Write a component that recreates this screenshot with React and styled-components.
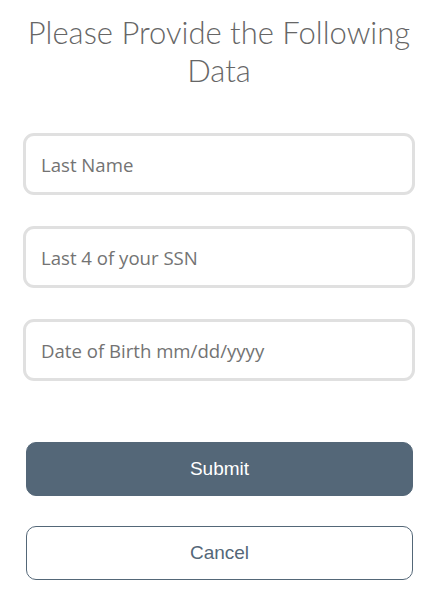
import React from 'react'
import styled, { createGlobalStyle } from 'styled-components'

const Global = createGlobalStyle`
  body {
    margin: 0;
    background: #fff;
  }
`

const Page = styled.div`
  width: 444px;
  box-sizing: border-box;
  padding: 13px 29px 0 23px;
  display: flex;
  flex-direction: column;
`

const Title = styled.h1`
  margin: 0 0 44px;
  font-family: Lato, "Open Sans", sans-serif;
  font-weight: 300;
  font-size: 31px;
  line-height: 38px;
  color: #666;
  text-align: center;
`

const Fields = styled.div`
  display: flex;
  flex-direction: column;
  gap: 31px;
`

const Input = styled.input`
  box-sizing: border-box;
  width: 100%;
  height: 62px;
  padding: 0 15px;
  border: 3px solid #e0e0e0;
  border-radius: 11px;
  font-family: "Open Sans", "Noto Sans", sans-serif;
  font-size: 18.6px;
  color: #333;
  outline: none;

  &::placeholder {
    color: #737373;
  }
`

const Actions = styled.div`
  display: flex;
  flex-direction: column;
  gap: 30px;
  margin: 61px 2px 0 3px;
`

const Button = styled.button`
  box-sizing: border-box;
  height: 54px;
  border-radius: 10px;
  font-family: "Liberation Sans", Arial, sans-serif;
  font-size: 19px;
  cursor: pointer;
  border: 1px solid #546778;
  background: ${p => (p.$primary ? '#546778' : '#fff')};
  color: ${p => (p.$primary ? '#fff' : '#546778')};
`

export default function App() {
  return (
    <Page>
      <Global />
      <Title>Please Provide the Following Data</Title>
      <Fields>
        <Input placeholder="Last Name" />
        <Input placeholder="Last 4 of your SSN" />
        <Input placeholder="Date of Birth mm/dd/yyyy" />
      </Fields>
      <Actions>
        <Button $primary>Submit</Button>
        <Button>Cancel</Button>
      </Actions>
    </Page>
  )
}
